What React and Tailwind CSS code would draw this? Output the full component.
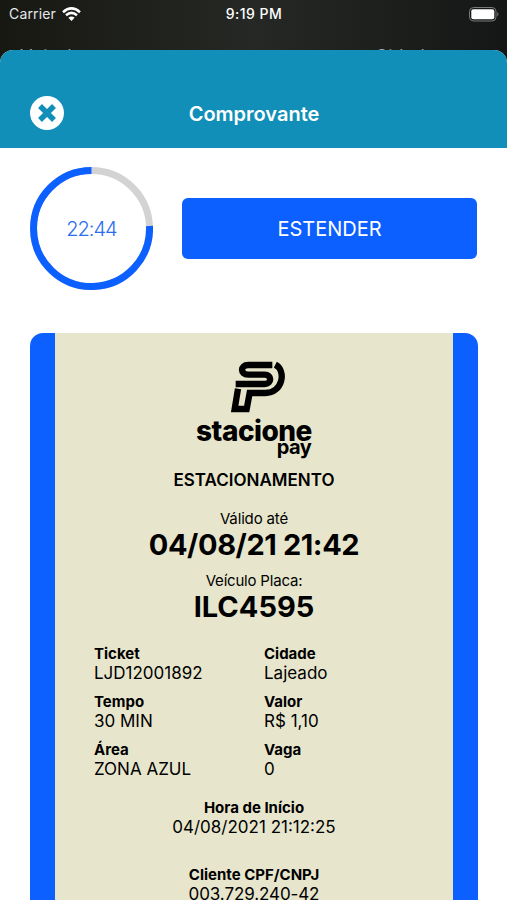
import React from 'react';

const details = [
  { label: 'Ticket', value: 'LJD12001892' },
  { label: 'Cidade', value: 'Lajeado' },
  { label: 'Tempo', value: '30 MIN' },
  { label: 'Valor', value: 'R$ 1,10' },
  { label: 'Área', value: 'ZONA AZUL' },
  { label: 'Vaga', value: '0' },
];

const StatusBar = () => (
  <div className="grid h-7 grid-cols-3 items-center pr-2 pl-[9px] text-[14px] leading-7 text-white">
    <div className="flex items-center gap-[6px]">
      <span className="tracking-[0.15px] text-gray-200">Carrier</span>
      <svg width="19" height="15" viewBox="0 0 19 15" fill="none" stroke="white" strokeWidth="2.5">
        <path d="M1 5.2Q9.5 -2.4 18 5.2" />
        <path d="M4 8.3Q9.5 3.4 15 8.3" />
        <path d="M6.4 10.8Q9.5 8.2 12.6 10.8L9.5 14Z" fill="white" stroke="none" />
      </svg>
    </div>
    <span className="text-center text-[14px] font-medium tracking-[0.5px]">9:19 PM</span>
    <svg className="justify-self-end" width="30" height="15" viewBox="0 0 30 15">
      <rect x="0.5" y="0.5" width="26.5" height="13.5" rx="4" fill="none" stroke="#77797a" />
      <rect x="2.3" y="2.3" width="23" height="10" rx="2" fill="white" />
      <path d="M28.3 5Q30.5 7.2 28.3 9.5Z" fill="#77797a" />
    </svg>
  </div>
);

const Timer = () => (
  <div className="grid size-[123px] place-items-center">
    <svg className="col-start-1 row-start-1" width="123" height="123" viewBox="0 0 123 123" fill="none" strokeWidth="7">
      <circle cx="61.5" cy="61.5" r="58" stroke="#d3d3d3" />
      <path d="M119.5 59A58 58 0 1 1 61.5 3.5" stroke="#0b60ff" />
    </svg>
    <span className="col-start-1 row-start-1 pt-px text-[20px] font-light tracking-[-1px] text-[#2b6df0]">22:44</span>
  </div>
);

const Logo = () => (
  <div className="flex flex-col items-center">
    <svg className="ml-2" width="60" height="58" viewBox="0 0 180 174" fill="none" stroke="black" strokeWidth="19">
      <path d="M133 21H60C36 21 36 50 60 50H110C132 50 132 78 110 78H23" />
      <path d="M142 20C176 38 164 105 112 105H65L56 153H20L30 92" />
    </svg>
    <span className="mt-px text-[28px] leading-[28px] font-extrabold tracking-[-0.5px]">stacione</span>
    <span className="-mt-[9px] ml-20 text-[20px] leading-[22px] font-bold tracking-[-0.6px]">pay</span>
  </div>
);

const App = () => {
  return (
    <div className="h-[900px] w-[507px] overflow-hidden bg-linear-to-r from-[#171812] via-[#262825] to-[#151716] font-['Inter','Liberation_Sans',sans-serif] text-black">
      <StatusBar />
      <div className="flex h-[22px] overflow-hidden pt-[18px] pl-5 text-[18px] leading-[22px] text-gray-400">
        <span className="w-[355px]">Veículo</span>
        <span>Cidade</span>
      </div>
      <div className="h-[850px] overflow-hidden rounded-t-[13px] bg-white">
        <header className="grid h-[98px] grid-cols-[34px_1fr_34px] items-center bg-[#118fb8] pt-7 pr-[29px] pl-[30px]">
          <button className="grid size-[34px] place-items-center rounded-full bg-white" aria-label="Fechar">
            <svg width="18" height="18" viewBox="0 0 18 18" stroke="#118fb8" strokeWidth="5.5">
              <path d="M2 2L16 16M16 2L2 16" />
            </svg>
          </button>
          <h1 className="pt-px text-center text-[20px] font-semibold text-white">Comprovante</h1>
        </header>

        <div className="flex items-center gap-[29px] px-[30px] pt-[19px] pb-[43px]">
          <Timer />
          <button className="h-[61px] w-[296px] rounded-md bg-[#0b60ff] text-[20px] text-white">ESTENDER</button>
        </div>

        <main className="mr-[29px] ml-[30px] h-[600px] rounded-t-[13px] bg-[#0b60ff] px-[25px]">
          <div className="flex h-full flex-col items-center bg-[#e7e6cc] pt-[25px]">
            <Logo />
            <h2 className="mt-[10px] text-[17px] leading-6 font-semibold">ESTACIONAMENTO</h2>
            <p className="mt-[17px] text-[15px] leading-5 tracking-[-0.15px]">Válido até</p>
            <p className="text-[29px] leading-8 font-bold tracking-[-0.4px]">04/08/21 21:42</p>
            <p className="mt-[10px] text-[15px] leading-5 tracking-[-0.2px]">Veículo Placa:</p>
            <p className="text-[29px] leading-8 font-bold">ILC4595</p>
            <dl className="mt-[22px] grid w-[320px] grid-cols-[170px_150px] gap-y-[10px]">
              {details.map(({ label, value }) => (
                <div key={label}>
                  <dt className="text-[15px] leading-[18px] font-bold">{label}</dt>
                  <dd className="text-[17px] leading-5">{value}</dd>
                </div>
              ))}
            </dl>
            <div className="mt-5 text-center">
              <p className="text-[15px] leading-[18px] font-bold">Hora de Início</p>
              <p className="text-[17px] leading-5">04/08/2021 21:12:25</p>
            </div>
            <div className="mt-[29px] text-center">
              <p className="text-[15px] leading-[18px] font-bold">Cliente CPF/CNPJ</p>
              <p className="text-[17px] leading-5 tracking-[-0.1px]">003.729.240-42</p>
            </div>
          </div>
        </main>
      </div>
    </div>
  );
};

export default App;
